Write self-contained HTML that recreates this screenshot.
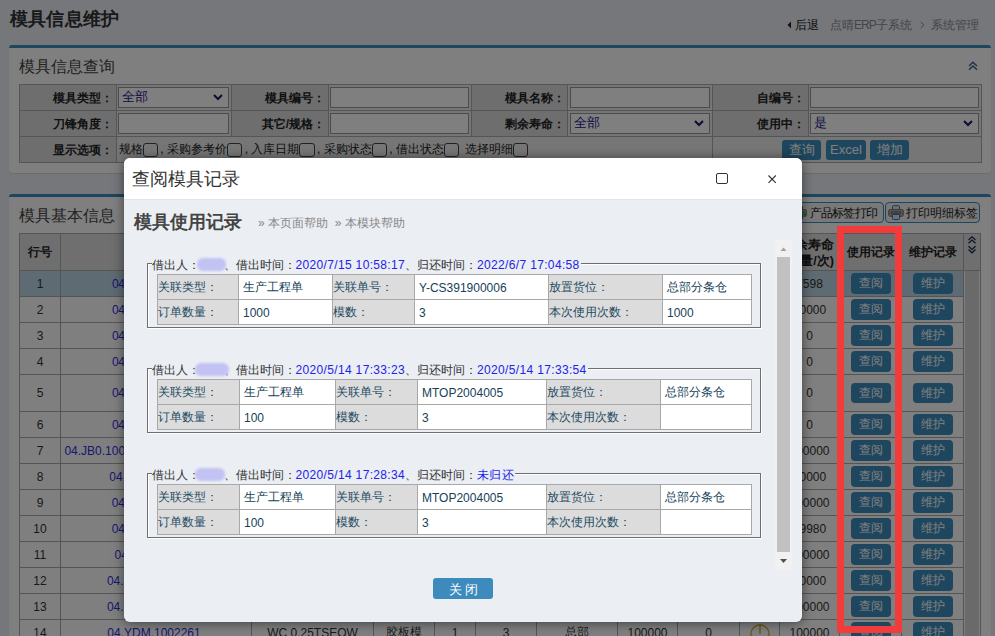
<!DOCTYPE html>
<html><head><meta charset="utf-8">
<style>
*{box-sizing:border-box;margin:0;padding:0}
html,body{width:995px;height:636px;overflow:hidden}
body{font-family:"Liberation Sans",sans-serif;background:#eaeef6;color:#333;position:relative;font-size:12px}
.abs{position:absolute}
#ptitle{left:9.5px;top:7px;font-size:18.4px;letter-spacing:0.4px;font-weight:bold;color:#333;white-space:nowrap;line-height:24px}
.crumb{top:17px;font-size:12px;line-height:17px;white-space:nowrap;color:#8a8a8a}
.panel{background:#fff;border-top:3px solid #3c8dbc;border-radius:3px;box-shadow:0 1px 1px rgba(0,0,0,.1)}
#p1{left:9px;top:45px;width:982px;height:128px}
#p2{left:9px;top:194px;width:982px;height:460px}
.pbtn{top:5.2px;height:20.5px;border:1.5px solid #3c8dbc;border-radius:4px;background:#f2f2f2;font-size:12px;color:#222;white-space:nowrap;line-height:16px}
.ptitle2{font-size:16px;color:#444;white-space:nowrap;line-height:20px}
table{border-collapse:collapse}
#ftab{position:absolute;left:10px;top:36px;table-layout:fixed}
#ftab td{border:1px solid #aaa;height:26px;padding:0}
#ftab td.l{background:#dcdcdc;text-align:right;font-weight:bold;font-size:12px;color:#222;padding-right:2.5px;padding-top:1px}
#ftab td.v{background:#ececec;padding:2px 2px 2px 1.5px}
.inp{height:20.5px;border:1px solid #999;background:#fff;position:relative;font-size:12.5px;color:#22208a;line-height:19px;padding-left:3px}
.inp .car{position:absolute;right:5px;top:6px}
.cb{display:inline-block;width:15.4px;height:14.5px;border:1px solid #444;border-radius:3px;background:#eee;vertical-align:-2px;margin-right:2.3px;position:relative;top:2px}
.btn{position:absolute;top:0.5px;width:39.2px;background:#3c8dbc;color:#fff;border-radius:3px;height:20.2px;line-height:20px;font-size:13px;text-align:center}
#dtab{position:absolute;left:10px;top:35.5px;table-layout:fixed}
#dtab td,#dtab th{border:1px solid #aaa;height:26px;padding:0;text-align:center;font-size:12px;color:#333;white-space:nowrap;overflow:hidden;background:#fff}
#dtab th{background:#dedede;height:37px;font-weight:bold;color:#222;font-size:12px;padding-top:2px}
#dtab td{padding-top:1px}
#dtab td.lk{color:#3030e0}
#dtab tr.sel td{background:#bcd6e6}
#dtab td.sc,#dtab tr.sel td.sc{background:#fff;padding:0;vertical-align:top}
#dtab th.schd{vertical-align:top;padding-top:2px}
.pw{display:inline-block;width:18px;height:18px;border:1.5px solid #c8a040;border-radius:50%;vertical-align:middle;position:relative}
.tbtn{display:inline-block;width:40px;height:20.5px;line-height:20px;background:#3c8dbc;color:#fff;border-radius:4px;font-size:12px;vertical-align:middle}
#overlay{left:0;top:0;width:995px;height:636px;background:rgba(0,0,0,.5)}
#modal{left:124px;top:158px;width:678px;height:464px;background:#ebeef3;border-radius:6px;box-shadow:0 1px 12px rgba(0,0,0,.5);overflow:hidden}
#mhead{left:0;top:0;width:678px;height:42px;background:#fff;border-bottom:1px solid #e3e3e3}
#mtitle{left:8px;top:9px;font-size:18px;line-height:24px;color:#333;white-space:nowrap}
#mmax{left:592px;top:15px;width:12px;height:11px;border:1.3px solid #333;border-radius:2px}
#mclose{left:643px;top:15.5px;width:10px;height:10px}
#mh2{left:10px;top:52px;font-size:18px;font-weight:bold;color:#444;line-height:24px;white-space:nowrap}
#mhelp{left:134px;top:57px;font-size:12px;color:#888;line-height:16px;white-space:nowrap}
fieldset.fs{position:absolute;left:23px;width:614px;height:65px;border:1px solid #6e6e6e;box-shadow:inset 1px 1px 0 #fff,1px 1px 0 #fff}
.legend{position:absolute;left:3.5px;top:-7px;font-size:12px;line-height:16px;color:#333;white-space:nowrap;background:#ebeef3;padding-right:1px}
.legend .d{color:#2323e8;letter-spacing:0.34px}
.nm{display:inline-block;width:24px;height:12px;position:relative;vertical-align:-1px}
.blob{position:absolute;left:-2.5px;top:-0.5px;width:28.5px;height:13px;background:#c3c3f3;border-radius:6px;filter:blur(1px)}
.itab{position:absolute;left:9px;top:10px;table-layout:fixed}
.itab td{border:1px solid #a8a8a8;height:25px;padding:1px 0 0 4px;font-size:12px;color:#163f58;background:#fff;white-space:nowrap;overflow:hidden}
.itab td.g{background:#dcdcdc;padding-left:0;color:#1e4b64}
#sb{left:651px;top:82px;width:17px;height:330px;background:#f1f1f1}
#sbthumb{left:2px;top:17px;width:13px;height:295px;background:#c1c1c1}
#closebtn{left:309px;top:420px;width:60px;height:21px;background:#3d8bbd;border-radius:3px;color:#fff;font-size:13px;line-height:23px;text-align:center;letter-spacing:3px;padding-left:3px}
#red{left:837px;top:226px;width:65px;height:407px;border:7px solid #f23c3c}
</style></head><body>

<div id="ptitle" class="abs">模具信息维护</div>
<svg class="abs" style="left:787px;top:21px" width="5" height="8" viewBox="0 0 5 8"><path d="M4 0.5L0.5 4L4 7.5Z" fill="#222"/></svg>
<div class="abs crumb" style="left:794.8px;color:#222">后退</div>
<div class="abs crumb" style="left:830px">点晴<span style="letter-spacing:-1px">ERP</span>子系统</div>
<svg class="abs" style="left:920px;top:21px" width="5" height="8" viewBox="0 0 5 8"><path d="M0.8 0.8L3.8 4L0.8 7.2" fill="none" stroke="#888" stroke-width="1"/></svg>
<div class="abs crumb" style="left:930.5px">系统管理</div>

<div id="p1" class="abs panel">
  <div class="abs ptitle2" style="left:10px;top:8.5px">模具信息查询</div>
  <svg class="abs" style="left:959px;top:13px" width="10" height="10" viewBox="0 0 10 10"><path d="M1 5L5 1.2L9 5M1 8.8L5 5L9 8.8" fill="none" stroke="#3a5f9a" stroke-width="1.4"/></svg>
  <table id="ftab">
    <colgroup><col style="width:96.6px"><col style="width:115px"><col style="width:97px"><col style="width:143.5px"><col style="width:96.3px"><col style="width:144.3px"><col style="width:96.3px"><col style="width:173px"></colgroup>
    <tr><td class="l">模具类型：</td><td class="v"><div class="inp">全部<svg class="car" width="10" height="7" viewBox="0 0 10 7"><path d="M1 1L5 5L9 1" fill="none" stroke="#1a1a60" stroke-width="2"/></svg></div></td>
        <td class="l">模具编号：</td><td class="v"><div class="inp"></div></td>
        <td class="l">模具名称：</td><td class="v"><div class="inp"></div></td>
        <td class="l">自编号：</td><td class="v"><div class="inp"></div></td></tr>
    <tr><td class="l">刀锋角度：</td><td class="v"><div class="inp"></div></td>
        <td class="l">其它/规格：</td><td class="v"><div class="inp"></div></td>
        <td class="l">剩余寿命：</td><td class="v"><div class="inp">全部<svg class="car" width="10" height="7" viewBox="0 0 10 7"><path d="M1 1L5 5L9 1" fill="none" stroke="#1a1a60" stroke-width="2"/></svg></div></td>
        <td class="l">使用中：</td><td class="v"><div class="inp">是<svg class="car" width="10" height="7" viewBox="0 0 10 7"><path d="M1 1L5 5L9 1" fill="none" stroke="#1a1a60" stroke-width="2"/></svg></div></td></tr>
    <tr><td class="l">显示选项：</td><td class="v" colspan="5" style="font-size:12px;color:#222;padding-left:2px"><div style="position:relative;top:0;height:21px;line-height:21px">规格<span class="cb"></span>, 采购参考价<span class="cb"></span>, 入库日期<span class="cb"></span>, 采购状态<span class="cb"></span>, 借出状态<span class="cb"></span> 选择明细<span class="cb"></span></div></td>
        <td class="v" colspan="2" style="text-align:center"><div style="position:relative;height:21px"><span class="btn" style="left:68.1px">查询</span><span class="btn" style="left:112.2px">Excel</span><span class="btn" style="left:156px">增加</span></div></td></tr>
  </table>
</div>

<div id="p2" class="abs panel">
  <div class="abs ptitle2" style="left:10px;top:8.5px">模具基本信息</div>
  <div class="abs pbtn" style="left:779px;width:96.2px"><svg class="abs" style="left:1.5px;top:1.5px" width="16" height="15" viewBox="0 0 16 15"><rect x="4.5" y="0.7" width="7" height="5" rx="0.8" fill="#d8e4f0" stroke="#3c72a8" stroke-width="1"/><rect x="0.7" y="4.5" width="14.6" height="6.8" rx="1.5" fill="#b4b4b4" stroke="#707070" stroke-width="1"/><rect x="2.5" y="6.3" width="11" height="1.2" fill="#666"/><rect x="2.5" y="8.3" width="11" height="1.2" fill="#666"/><rect x="4.5" y="9.5" width="7" height="5" rx="0.8" fill="#d8e4f0" stroke="#3c72a8" stroke-width="1"/></svg><span class="abs" style="left:20.5px;top:1.5px;letter-spacing:-0.7px;color:#111">产品标签打印</span><i class="abs" style="left:14px;top:10px;width:3px;height:3px;background:#3c3;border-radius:1px"></i></div>
  <div class="abs pbtn" style="left:876.1px;width:95.3px"><svg class="abs" style="left:1.5px;top:1.5px" width="16" height="15" viewBox="0 0 16 15"><rect x="4.5" y="0.7" width="7" height="5" rx="0.8" fill="#d8e4f0" stroke="#3c72a8" stroke-width="1"/><rect x="0.7" y="4.5" width="14.6" height="6.8" rx="1.5" fill="#b4b4b4" stroke="#707070" stroke-width="1"/><rect x="2.5" y="6.3" width="11" height="1.2" fill="#666"/><rect x="2.5" y="8.3" width="11" height="1.2" fill="#666"/><rect x="4.5" y="9.5" width="7" height="5" rx="0.8" fill="#d8e4f0" stroke="#3c72a8" stroke-width="1"/></svg><span class="abs" style="left:19.7px;top:1.5px">打印明细标签</span></div>
  <table id="dtab">
    <colgroup><col style="width:41px"><col style="width:191px"><col style="width:122px"><col style="width:61px"><col style="width:41px"><col style="width:61px"><col style="width:81px"><col style="width:60px"><col style="width:62px"><col style="width:40px"><col style="width:60px"><col style="width:62px"><col style="width:62px"><col style="width:17px"></colgroup>
    <tr><th>行号</th><th>模具编号</th><th>其它/规格</th><th>类型</th><th>数量</th><th>模数</th><th>放置货位</th><th>总寿命</th><th>已用</th><th>状态</th><th style="font-size:12.5px;line-height:16px;text-align:right;padding-right:5px;padding-top:3px">剩余寿命<br>(量/次)</th><th>使用记录</th><th>维护记录</th><th class="schd"><svg width="10" height="18" viewBox="0 0 10 18" style="display:block;margin:0 auto"><path d="M1.5 4L5 0.8L8.5 4M1.5 7.3L5 4.1L8.5 7.3M1.5 10.2L5 13.4L8.5 10.2M1.5 13.6L5 16.8L8.5 13.6" fill="none" stroke="#1d2a55" stroke-width="1.3"/></svg></th></tr>
<tr class="sel"><td>1</td><td class="lk" style="letter-spacing:-0.4px">04.YDM.1002261</td><td>WC 0.25TSEOW</td><td>胶板模</td><td>1</td><td>3</td><td>总部</td><td>100000</td><td>0</td><td><svg width="20" height="20" viewBox="0 0 20 20" style="vertical-align:middle;position:relative;top:1px"><circle cx="10" cy="10" r="9.1" fill="none" stroke="#d4a000" stroke-width="1.2"/><path d="M10 0.6V10" stroke="#d4a000" stroke-width="1.2"/></svg></td><td>7598</td><td><span class="tbtn">查阅</span></td><td><span class="tbtn">维护</span></td><td class="sc" rowspan="14"></td></tr>
<tr><td>2</td><td class="lk" style="letter-spacing:-0.4px">04.YDM.1002261</td><td>WC 0.25TSEOW</td><td>胶板模</td><td>1</td><td>3</td><td>总部</td><td>100000</td><td>0</td><td><svg width="20" height="20" viewBox="0 0 20 20" style="vertical-align:middle;position:relative;top:1px"><circle cx="10" cy="10" r="9.1" fill="none" stroke="#d4a000" stroke-width="1.2"/><path d="M10 0.6V10" stroke="#d4a000" stroke-width="1.2"/></svg></td><td>10000</td><td><span class="tbtn">查阅</span></td><td><span class="tbtn">维护</span></td></tr>
<tr><td>3</td><td class="lk" style="letter-spacing:-0.4px">04.YDM.1002261</td><td>WC 0.25TSEOW</td><td>胶板模</td><td>1</td><td>3</td><td>总部</td><td>100000</td><td>0</td><td><svg width="20" height="20" viewBox="0 0 20 20" style="vertical-align:middle;position:relative;top:1px"><circle cx="10" cy="10" r="9.1" fill="none" stroke="#d4a000" stroke-width="1.2"/><path d="M10 0.6V10" stroke="#d4a000" stroke-width="1.2"/></svg></td><td>0</td><td><span class="tbtn">查阅</span></td><td><span class="tbtn">维护</span></td></tr>
<tr><td>4</td><td class="lk" style="letter-spacing:-0.4px">04.YDM.1002261</td><td>WC 0.25TSEOW</td><td>胶板模</td><td>1</td><td>3</td><td>总部</td><td>100000</td><td>0</td><td><svg width="20" height="20" viewBox="0 0 20 20" style="vertical-align:middle;position:relative;top:1px"><circle cx="10" cy="10" r="9.1" fill="none" stroke="#d4a000" stroke-width="1.2"/><path d="M10 0.6V10" stroke="#d4a000" stroke-width="1.2"/></svg></td><td>0</td><td><span class="tbtn">查阅</span></td><td><span class="tbtn">维护</span></td></tr>
<tr style="height:37px"><td>5</td><td class="lk" style="letter-spacing:-0.4px">04.YDM.1002261</td><td>WC 0.25TSEOW</td><td>胶板模</td><td>1</td><td>3</td><td>总部</td><td>100000</td><td>0</td><td><svg width="20" height="20" viewBox="0 0 20 20" style="vertical-align:middle;position:relative;top:1px"><circle cx="10" cy="10" r="9.1" fill="none" stroke="#d4a000" stroke-width="1.2"/><path d="M10 0.6V10" stroke="#d4a000" stroke-width="1.2"/></svg></td><td>0</td><td><span class="tbtn">查阅</span></td><td><span class="tbtn">维护</span></td></tr>
<tr><td>6</td><td class="lk" style="letter-spacing:-0.4px">04.YDM.1002261</td><td>WC 0.25TSEOW</td><td>胶板模</td><td>1</td><td>3</td><td>总部</td><td>100000</td><td>0</td><td><svg width="20" height="20" viewBox="0 0 20 20" style="vertical-align:middle;position:relative;top:1px"><circle cx="10" cy="10" r="9.1" fill="none" stroke="#d4a000" stroke-width="1.2"/><path d="M10 0.6V10" stroke="#d4a000" stroke-width="1.2"/></svg></td><td>0</td><td><span class="tbtn">查阅</span></td><td><span class="tbtn">维护</span></td></tr>
<tr><td>7</td><td class="lk" style="padding-right:5px">04.JB0.1002216/04.JB0.1002216</td><td>WC 0.25TSEOW</td><td>胶板模</td><td>1</td><td>3</td><td>总部</td><td>100000</td><td>0</td><td><svg width="20" height="20" viewBox="0 0 20 20" style="vertical-align:middle;position:relative;top:1px"><circle cx="10" cy="10" r="9.1" fill="none" stroke="#d4a000" stroke-width="1.2"/><path d="M10 0.6V10" stroke="#d4a000" stroke-width="1.2"/></svg></td><td>100000</td><td><span class="tbtn">查阅</span></td><td><span class="tbtn">维护</span></td></tr>
<tr><td>8</td><td class="lk" style="">04.YDM.1002261</td><td>WC 0.25TSEOW</td><td>胶板模</td><td>1</td><td>3</td><td>总部</td><td>100000</td><td>0</td><td><svg width="20" height="20" viewBox="0 0 20 20" style="vertical-align:middle;position:relative;top:1px"><circle cx="10" cy="10" r="9.1" fill="none" stroke="#d4a000" stroke-width="1.2"/><path d="M10 0.6V10" stroke="#d4a000" stroke-width="1.2"/></svg></td><td>10000</td><td><span class="tbtn">查阅</span></td><td><span class="tbtn">维护</span></td></tr>
<tr><td>9</td><td class="lk" style="padding-right:2px">04.YDM.100226</td><td>WC 0.25TSEOW</td><td>胶板模</td><td>1</td><td>3</td><td>总部</td><td>100000</td><td>0</td><td><svg width="20" height="20" viewBox="0 0 20 20" style="vertical-align:middle;position:relative;top:1px"><circle cx="10" cy="10" r="9.1" fill="none" stroke="#d4a000" stroke-width="1.2"/><path d="M10 0.6V10" stroke="#d4a000" stroke-width="1.2"/></svg></td><td>100000</td><td><span class="tbtn">查阅</span></td><td><span class="tbtn">维护</span></td></tr>
<tr><td>10</td><td class="lk" style="padding-right:2px">04.YDM.100226</td><td>WC 0.25TSEOW</td><td>胶板模</td><td>1</td><td>3</td><td>总部</td><td>100000</td><td>0</td><td><svg width="20" height="20" viewBox="0 0 20 20" style="vertical-align:middle;position:relative;top:1px"><circle cx="10" cy="10" r="9.1" fill="none" stroke="#d4a000" stroke-width="1.2"/><path d="M10 0.6V10" stroke="#d4a000" stroke-width="1.2"/></svg></td><td>99980</td><td><span class="tbtn">查阅</span></td><td><span class="tbtn">维护</span></td></tr>
<tr><td>11</td><td class="lk" style="padding-right:3px">04.YDM.10022</td><td>WC 0.25TSEOW</td><td>胶板模</td><td>1</td><td>3</td><td>总部</td><td>100000</td><td>0</td><td><svg width="20" height="20" viewBox="0 0 20 20" style="vertical-align:middle;position:relative;top:1px"><circle cx="10" cy="10" r="9.1" fill="none" stroke="#d4a000" stroke-width="1.2"/><path d="M10 0.6V10" stroke="#d4a000" stroke-width="1.2"/></svg></td><td>100000</td><td><span class="tbtn">查阅</span></td><td><span class="tbtn">维护</span></td></tr>
<tr><td>12</td><td class="lk" style="padding-left:1px">04.YDM.10022611</td><td>WC 0.25TSEOW</td><td>胶板模</td><td>1</td><td>3</td><td>总部</td><td>100000</td><td>0</td><td><svg width="20" height="20" viewBox="0 0 20 20" style="vertical-align:middle;position:relative;top:1px"><circle cx="10" cy="10" r="9.1" fill="none" stroke="#d4a000" stroke-width="1.2"/><path d="M10 0.6V10" stroke="#d4a000" stroke-width="1.2"/></svg></td><td>10000</td><td><span class="tbtn">查阅</span></td><td><span class="tbtn">维护</span></td></tr>
<tr><td>13</td><td class="lk" style="padding-left:1px">04.YDM.10022611</td><td>WC 0.25TSEOW</td><td>胶板模</td><td>1</td><td>3</td><td>总部</td><td>100000</td><td>0</td><td><svg width="20" height="20" viewBox="0 0 20 20" style="vertical-align:middle;position:relative;top:1px"><circle cx="10" cy="10" r="9.1" fill="none" stroke="#d4a000" stroke-width="1.2"/><path d="M10 0.6V10" stroke="#d4a000" stroke-width="1.2"/></svg></td><td>100000</td><td><span class="tbtn">查阅</span></td><td><span class="tbtn">维护</span></td></tr>
<tr><td>14</td><td class="lk" style="padding-right:4px">04.YDM.1002261</td><td>WC 0.25TSEOW</td><td>胶板模</td><td>1</td><td>3</td><td>总部</td><td>100000</td><td>0</td><td><svg width="20" height="20" viewBox="0 0 20 20" style="vertical-align:middle;position:relative;top:1px"><circle cx="10" cy="10" r="9.1" fill="none" stroke="#d4a000" stroke-width="1.2"/><path d="M10 0.6V10" stroke="#d4a000" stroke-width="1.2"/></svg></td><td>100000</td><td><span class="tbtn">查阅</span></td><td><span class="tbtn">维护</span></td></tr>
  </table>
  <div class="abs" style="left:956px;top:74px;width:13.5px;height:400px;background:#d5d5d5"></div>
</div>

<div id="overlay" class="abs"></div>

<div id="modal" class="abs">
  <div id="mhead" class="abs">
    <div id="mtitle" class="abs">查阅模具记录</div>
    <div id="mmax" class="abs"></div>
    <svg id="mclose" class="abs" viewBox="0 0 10 10"><path d="M1.5 1.5L8.8 8.8M8.8 1.5L1.5 8.8" stroke="#333" stroke-width="1.1"/></svg>
  </div>
  <div id="mh2" class="abs">模具使用记录</div>
  <div id="mhelp" class="abs">» 本页面帮助 &nbsp;» 本模块帮助</div>

  <fieldset class="fs" style="top:105px"><div class="legend">借出人：<span class="nm"><i class="blob"></i></span>、借出时间：<span class="d">2020/7/15 10:58:17</span>、归还时间：<span class="d">2022/6/7 17:04:58</span></div>
    <table class="itab"><colgroup><col style="width:81px"><col style="width:94px"><col style="width:82px"><col style="width:134px"><col style="width:114px"><col style="width:89px"></colgroup>
      <tr><td class="g">关联类型：</td><td>生产工程单</td><td class="g">关联单号：</td><td>Y-CS391900006</td><td class="g">放置货位：</td><td>总部分条仓</td></tr>
      <tr><td class="g">订单数量：</td><td>1000</td><td class="g">模数：</td><td>3</td><td class="g">本次使用次数：</td><td>1000</td></tr>
    </table></fieldset>

  <fieldset class="fs" style="top:210px"><div class="legend">借出人：<span class="nm"><i class="blob" style="left:-4.5px;width:33.5px"></i></span>、借出时间：<span class="d">2020/5/14 17:33:23</span>、归还时间：<span class="d">2020/5/14 17:33:54</span></div>
    <table class="itab"><colgroup><col style="width:82px"><col style="width:95.5px"><col style="width:82.5px"><col style="width:128.5px"><col style="width:114px"><col style="width:91px"></colgroup>
      <tr><td class="g">关联类型：</td><td>生产工程单</td><td class="g">关联单号：</td><td>MTOP2004005</td><td class="g">放置货位：</td><td>总部分条仓</td></tr>
      <tr><td class="g">订单数量：</td><td>100</td><td class="g">模数：</td><td>3</td><td class="g">本次使用次数：</td><td></td></tr>
    </table></fieldset>

  <fieldset class="fs" style="top:315px"><div class="legend">借出人：<span class="nm"><i class="blob" style="left:-4.5px;width:30px"></i></span>、借出时间：<span class="d">2020/5/14 17:28:34</span>、归还时间：<span class="d">未归还</span></div>
    <table class="itab"><colgroup><col style="width:82px"><col style="width:95.5px"><col style="width:82.5px"><col style="width:128.5px"><col style="width:114px"><col style="width:91px"></colgroup>
      <tr><td class="g">关联类型：</td><td>生产工程单</td><td class="g">关联单号：</td><td>MTOP2004005</td><td class="g">放置货位：</td><td>总部分条仓</td></tr>
      <tr><td class="g">订单数量：</td><td>100</td><td class="g">模数：</td><td>3</td><td class="g">本次使用次数：</td><td></td></tr>
    </table></fieldset>

  <div id="sb" class="abs"><svg class="abs" style="left:5px;top:6.5px" width="7" height="4.5" viewBox="0 0 7 4.5"><path d="M0 4.5L3.5 0.5L7 4.5Z" fill="#a3a3a3"/></svg><div id="sbthumb" class="abs"></div><svg class="abs" style="left:5px;top:319px" width="7" height="4.5" viewBox="0 0 7 4.5"><path d="M0 0L3.5 4L7 0Z" fill="#505050"/></svg></div>
  <div id="closebtn" class="abs">关闭</div>
</div>

<div id="red" class="abs"></div>
</body></html>
